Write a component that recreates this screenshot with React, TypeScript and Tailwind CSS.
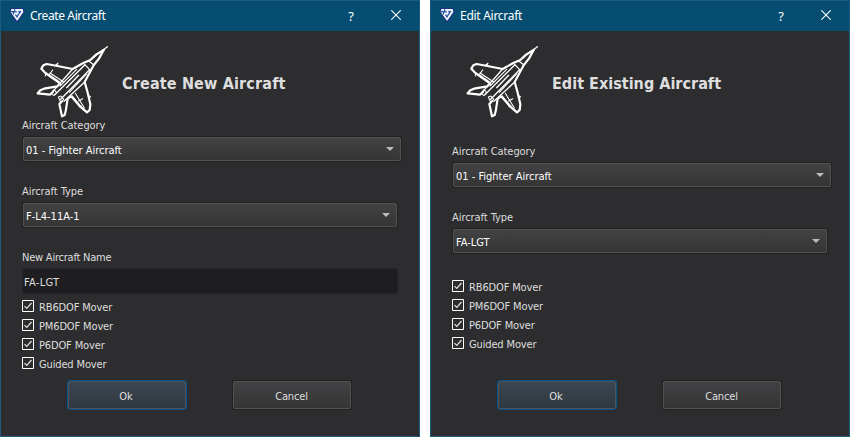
import { useState } from 'react';

const uiFont = "font-['Noto_Sans','Open_Sans',sans-serif]";

function AppLogo() {
  return (
    <svg width="16" height="16" viewBox="0 0 16 16" className="block shrink-0">
      <path d="M1.6 0H14.4L15.6 3.8L8.8 14.8H7.4L.4 3.8Z" fill="#1b3580" />
      <path d="M2.4 .9H13.6L14.4 4L8.5 12.6H7.7L1.6 4Z" fill="#eef2fb" />
      <path d="M1.8 3.6H4.4V6.4M5.6 1.2V3.8H7.8M9.3 3.6H11.4L9.2 6.8L8 8.8L6.4 6.6" stroke="#2850a2" strokeWidth="1.2" fill="none" />
    </svg>
  );
}

function Jet() {
  return (
    <svg width="85" height="85" viewBox="0 0 255 255" fill="none" stroke="#fff" strokeLinejoin="round" strokeLinecap="round" className="block">
      <g strokeWidth="6.5">
        <path d="M221 30C203 39 191 49 181 60L160 69L128 87L82 78L50 72L40 76L34 86L46 99L59 107L90 129L82 139L42 146L31 151L23 160L60 164L69 156" />
        <path d="M221 30C212 50 203 63 191 76L180 96L164 126L173 158L181 193L179 210L171 217L151 200L124 169L113 176L107 214L104 225L96 229L88 192L96 184" />
      </g>
      <path d="M219 31L232 20" strokeWidth="4" />
      <g strokeWidth="4">
        <path d="M128 87L66 157M164 126L102 184" />
        <path d="M176 63L192 75M164 73L181 91" />
        <path d="M164 75L76 163M178 90L92 178" />
        <path d="M146 106L110 143" />
      </g>
      <g strokeWidth="3.2">
        <path d="M140 88L90 138M170 102L118 157" />
        <path d="M60 99L101 126M52 105L93 134M136 160L163 204M127 168L154 201" />
        <path d="M68 90L58 104M146 183L158 176" />
        <path d="M72 149L80 158L72 167L64 160ZM85 171L93 168L101 178L92 187Z" />
        <path d="M77 75L84 70M82 76V70M47 100L46 108M178 168L182 171M153 198L147 200" />
      </g>
    </svg>
  );
}

function TitleBar({ title }: { title: string }) {
  return (
    <header className="flex h-[30px] shrink-0 items-center bg-[#064e71] pl-2 text-white">
      <AppLogo />
      <span className={`ml-[5px] grow text-[12px] leading-4 ${title === 'Edit Aircraft' ? 'tracking-[-0.28px]' : 'tracking-[-0.38px]'} ${uiFont}`}>{title}</span>
      <span className={`mr-[2px] w-10 text-center text-[13px] leading-4 ${uiFont}`}>?</span>
      <span className="mr-px flex w-[45px] items-center justify-center">
        <svg width="10" height="10" viewBox="0 0 10 10" className="relative -top-px block" stroke="#fff" strokeWidth="1.1"><path d="M.3 .3L9.7 9.7M9.7 .3L.3 9.7" /></svg>
      </span>
    </header>
  );
}

function Select({ value, narrow }: { value: string; narrow?: boolean }) {
  return (
    <div className={`ml-[22px] flex h-6 items-center justify-between rounded-[2px] border border-[#535355] bg-linear-to-b from-[#424244] to-[#353536] pr-[6px] pl-[2px] shadow-[0_0_0_1px_#212122] ${narrow ? 'w-[374px]' : 'w-[378px]'}`}>
      <span className="pt-[3px] text-[11px] leading-4 tracking-[-0.01px] text-white">{value}</span>
      <svg width="8" height="4" viewBox="0 0 8 4" className="mb-px block"><path d="M0 0H8L4 4Z" fill="#bcbcbc" /></svg>
    </div>
  );
}

function Label({ children, tight }: { children: string; tight?: boolean }) {
  return <div className={`ml-[21px] h-4 pt-px text-[11px] leading-4 text-[#dedede] ${tight ? 'tracking-[-0.22px]' : 'tracking-[-0.06px]'}`}>{children}</div>;
}

function Check({ label }: { label: string }) {
  const [on, setOn] = useState(true);
  return (
    <button onClick={() => setOn(!on)} className="flex h-[19px] items-start gap-[5px] text-left">
      <svg width="12" height="12" viewBox="0 0 12 12" className="block shrink-0" fill="none">
        <path d="M.5 .5H11.5V11.5H.5Z" stroke="#fff" />
        {on && <path d="M2.5 6.1L4.8 8.4L9.5 3" stroke="#e4e4e4" strokeWidth="1.2" />}
      </svg>
      <span className="text-[11px] leading-4 tracking-[-0.14px] text-[#dedede]">{label}</span>
    </button>
  );
}

function Checks() {
  return (
    <div className="ml-[21px] flex flex-col">
      {['RB6DOF Mover', 'PM6DOF Mover', 'P6DOF Mover', 'Guided Mover'].map((m) => <Check key={m} label={m} />)}
    </div>
  );
}

function Buttons() {
  return (
    <div className="ml-[67px] flex h-7 gap-[47px] text-[11px] leading-4 text-[#dedede]">
      <button className="w-[118px] rounded-[2px] border border-[#4c555d] bg-linear-to-b from-[#3c4650] to-[#303941] pt-[3px] pr-[2px] shadow-[0_0_0_1px_#07508a]">Ok</button>
      <button className="w-[118px] rounded-[2px] border border-[#535355] bg-linear-to-b from-[#424244] to-[#353536] pt-[3px] pr-px tracking-[-0.15px] shadow-[0_0_0_1px_#212122]">Cancel</button>
    </div>
  );
}

function Dialog({ title, heading, edit }: { title: string; heading: string; edit?: boolean }) {
  return (
    <section className="flex h-[437px] w-[420px] flex-col border border-[#1d5b7c] bg-[#2d2d2f]">
      <TitleBar title={title} />
      <div className="ml-[29px] mt-[9px] flex h-[77px] items-start">
        <Jet />
        <h1 className={`ml-[7px] mt-[32px] whitespace-nowrap text-[16px] leading-6 font-bold text-[#dedede] ${edit ? 'tracking-[0.02px]' : 'tracking-[0.16px]'}`}>{heading}</h1>
      </div>
      <div className={edit ? 'mt-[26px]' : ''}>
        <Label>Aircraft Category</Label>
        <div className="mt-1"><Select value="01 - Fighter Aircraft" /></div>
        <div className="mt-[22px]"><Label>Aircraft Type</Label></div>
        <div className="mt-1"><Select narrow value={edit ? 'FA-LGT' : 'F-L4-11A-1'} /></div>
      </div>
      {edit ? (
        <div className="mt-[27px]"><Checks /></div>
      ) : (
        <>
          <div className="mt-[22px]"><Label tight>New Aircraft Name</Label></div>
          <div className="ml-[21px] mt-[3px] flex h-[26px] w-[376px] items-center rounded-[3px] border border-[#242426] bg-[#1e1e20] px-px pt-[3px] text-[11px] leading-4 tracking-[0.3px] text-[#dedede]">FA-LGT</div>
          <div className="mt-[6px]"><Checks /></div>
        </>
      )}
      <div className={edit ? 'mt-[25px]' : 'mt-[5px]'}><Buttons /></div>
    </section>
  );
}

export default function App() {
  return (
    <main className="flex h-[437px] w-[850px] gap-[10px] overflow-hidden bg-white font-['DejaVu_Sans_Condensed','Noto_Sans',sans-serif]">
      <Dialog title="Create Aircraft" heading="Create New Aircraft" />
      <Dialog title="Edit Aircraft" heading="Edit Existing Aircraft" edit />
    </main>
  );
}
